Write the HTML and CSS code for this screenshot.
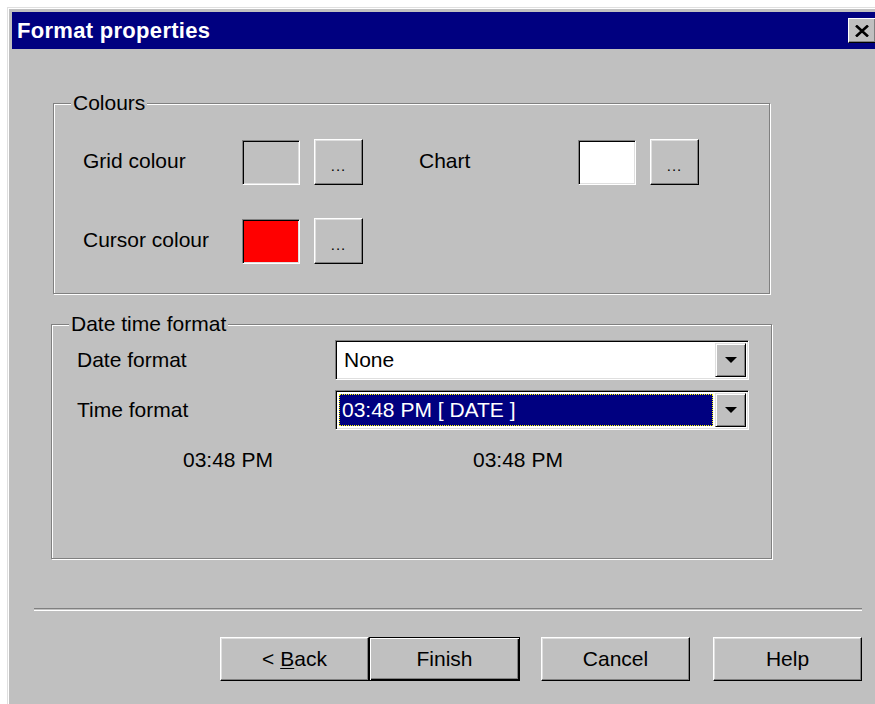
FILE: index.html
```html
<!DOCTYPE html>
<html lang="en">
<head>
<meta charset="utf-8">
<title>Format properties</title>
<link rel="stylesheet" href="styles.css">
</head>
<body>
<div class="window">
  <div class="titlebar">
    <span class="title">Format properties</span>
    <button class="close" type="button" aria-label="Close">
      <svg width="14" height="12" viewBox="0 0 14 12"><path d="M1 0.5 L13 11.5 M13 0.5 L1 11.5" stroke="#000" stroke-width="2.6" fill="none"/></svg>
    </button>
  </div>
  <div class="content">
    <div class="group colours">
      <span class="legend">Colours</span>
      <div class="colour-grid">
        <div class="field">
          <span class="label">Grid colour</span>
          <span class="swatch"></span>
          <button class="btn dots" type="button">...</button>
        </div>
        <div class="field">
          <span class="label">Chart</span>
          <span class="swatch white"></span>
          <button class="btn dots" type="button">...</button>
        </div>
        <div class="field">
          <span class="label">Cursor colour</span>
          <span class="swatch red"></span>
          <button class="btn dots" type="button">...</button>
        </div>
      </div>
    </div>

    <div class="group datetime">
      <span class="legend">Date time format</span>
      <div class="row">
        <span class="row-label">Date format</span>
        <div class="combo">
          <span class="combo-text">None</span>
          <span class="drop"><span class="arrow"></span></span>
        </div>
      </div>
      <div class="row">
        <span class="row-label">Time format</span>
        <div class="combo">
          <span class="combo-text selected">03:48 PM [ DATE ]</span>
          <span class="drop"><span class="arrow"></span></span>
        </div>
      </div>
      <div class="preview">
        <span class="preview-item">03:48 PM</span>
        <span class="preview-item">03:48 PM</span>
      </div>
    </div>

    <div class="separator"></div>

    <div class="actions">
      <button class="btn action" type="button">&lt; <u>B</u>ack</button>
      <button class="btn action default" type="button">Finish</button>
      <button class="btn action gap" type="button">Cancel</button>
      <button class="btn action gap2" type="button">Help</button>
    </div>
  </div>
</div>
</body>
</html>
```

FILE: styles.css
```css
html, body {
  margin: 0;
  padding: 0;
  background: #ffffff;
  overflow: hidden;
}

body {
  font-family: "Liberation Sans", Arial, sans-serif;
  font-size: 21px;
  color: #000;
}

.window {
  margin: 7px 0 0 7px;
  width: 880px;
  height: 697px;
  box-sizing: border-box;
  background: #c0c0c0;
  border-top: 1px solid #dfdfdf;
  border-left: 1px solid #dfdfdf;
  box-shadow: inset 1px 1px 0 #ffffff;
  padding: 4px 4px 0 4px;
  overflow: hidden;
}

/* caption bar */
.titlebar {
  height: 37px;
  background: #000080;
  display: flex;
  align-items: center;
  padding-left: 5px;
}

.title {
  color: #ffffff;
  font-weight: bold;
  font-size: 22px;
  letter-spacing: 0.3px;
}

.close {
  margin-left: auto;
  margin-right: 7px;
  width: 28px;
  height: 25px;
  padding: 0;
  display: flex;
  align-items: center;
  justify-content: center;
  background: #c0c0c0;
  border-top: 1px solid #ffffff;
  border-left: 1px solid #ffffff;
  border-right: 1px solid #000;
  border-bottom: 1px solid #000;
  box-shadow: inset -1px -1px 0 #808080;
}

.content {
  padding-left: 39px;
}

/* etched group boxes */
.group {
  position: relative;
  box-sizing: border-box;
  border: 1px solid #808080;
  box-shadow: inset 1px 1px 0 #ffffff, 1px 1px 0 #ffffff;
}

.legend {
  position: absolute;
  top: -13px;
  left: 17px;
  padding: 0 2px;
  background: #c0c0c0;
  line-height: 24px;
}

.colours {
  margin: 54px 0 0 2px;
  width: 717px;
  height: 191px;
  padding: 35px 0 0 29px;
}

.colour-grid {
  display: grid;
  grid-template-columns: auto auto;
  justify-content: start;
  column-gap: 56px;
  row-gap: 33px;
}

.field {
  display: flex;
  align-items: center;
}

.label {
  width: 159px;
  line-height: 24px;
  margin-top: -2px;
}

.swatch {
  box-sizing: border-box;
  width: 58px;
  height: 45px;
  background: #c0c0c0;
  border-top: 1px solid #808080;
  border-left: 1px solid #808080;
  border-right: 1px solid #ffffff;
  border-bottom: 1px solid #ffffff;
  box-shadow: inset 1px 1px 0 #000, inset -1px -1px 0 #dfdfdf;
}

.swatch.white { background: #ffffff; }
.swatch.red { background: #ff0000; }

.btn {
  box-sizing: border-box;
  font-family: inherit;
  color: #000;
  background: #c0c0c0;
  border-top: 1px solid #ffffff;
  border-left: 1px solid #ffffff;
  border-right: 1px solid #000;
  border-bottom: 1px solid #000;
  box-shadow: inset -1px -1px 0 #808080, inset 1px 1px 0 #dfdfdf;
  padding: 0;
}

.dots {
  width: 49px;
  height: 46px;
  margin-left: 14px;
  font-size: 15px;
  letter-spacing: 1px;
  padding-top: 6px;
}

.datetime {
  margin-top: 30px;
  width: 721px;
  height: 235px;
  padding: 15px 0 0 25px;
}

.row {
  display: flex;
  align-items: center;
  margin-bottom: 10px;
}

.row-label {
  width: 258px;
}

.combo {
  box-sizing: border-box;
  width: 414px;
  height: 40px;
  display: flex;
  align-items: stretch;
  background: #ffffff;
  border-top: 1px solid #808080;
  border-left: 1px solid #808080;
  border-right: 1px solid #ffffff;
  border-bottom: 1px solid #ffffff;
  box-shadow: inset 1px 1px 0 #000, inset -1px -1px 0 #dfdfdf;
  padding: 2px 2px 2px 2px;
}

.combo-text {
  flex: 1;
  display: flex;
  align-items: center;
  padding-left: 6px;
  margin-right: 2px;
}

.combo-text.selected {
  background: #000080;
  color: #ffffff;
  border: 1px dotted #ffff00;
  padding-left: 2px;
  margin: 1px 2px 1px 1px;
}

.drop {
  width: 31px;
  box-sizing: border-box;
  display: flex;
  align-items: center;
  justify-content: center;
  background: #c0c0c0;
  border-top: 1px solid #dfdfdf;
  border-left: 1px solid #dfdfdf;
  border-right: 1px solid #000;
  border-bottom: 1px solid #000;
  box-shadow: inset 1px 1px 0 #ffffff, inset -1px -1px 0 #808080;
}

.arrow {
  width: 0;
  height: 0;
  border-left: 6px solid transparent;
  border-right: 6px solid transparent;
  border-top: 6px solid #000;
}

.preview {
  display: flex;
  margin-top: 18px;
  padding-left: 106px;
  line-height: 24px;
}

.preview-item {
  width: 290px;
}

.separator {
  margin: 49px 0 0 -17px;
  width: 828px;
  height: 1px;
  border-top: 1px solid #808080;
  border-bottom: 1px solid #ffffff;
}

.actions {
  display: flex;
  margin: 26px 0 0 169px;
}

.action {
  width: 149px;
  height: 44px;
  font-size: 21px;
}

.action.default {
  width: 151px;
  border: 1px solid #000;
  box-shadow: inset 1px 1px 0 #ffffff, inset -1px -1px 0 #000, inset -2px -2px 0 #808080;
}

.action.gap { margin-left: 21px; }
.action.gap2 { margin-left: 23px; }

u { text-decoration-thickness: 1px; text-underline-offset: 2px; }
```
